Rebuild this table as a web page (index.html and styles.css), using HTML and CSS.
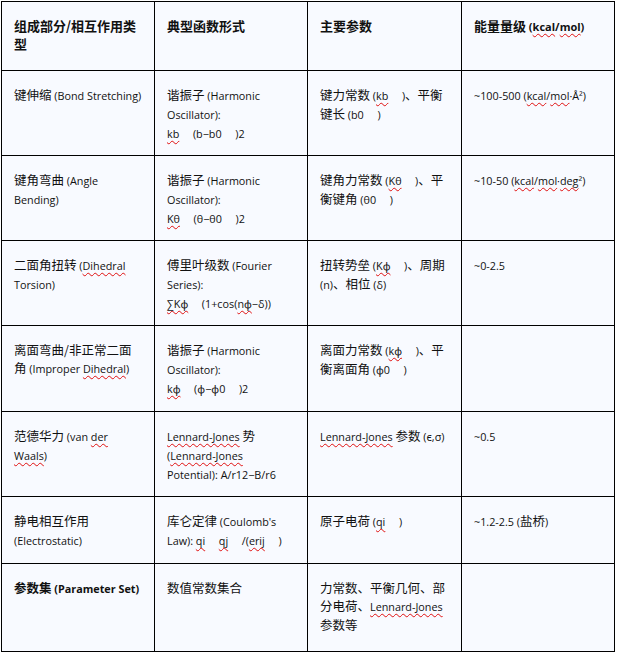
FILE: index.html
```html
<!DOCTYPE html>
<html lang="zh">
<head>
<meta charset="utf-8">
<title>力场组成</title>
<link rel="stylesheet" href="styles.css">
</head>
<body>
<div class="sheet">
  <div class="cell head">组成部分/相互作用类型</div>
  <div class="cell head">典型函数形式</div>
  <div class="cell head">主要参数</div>
  <div class="cell head">能量量级<span class="en"> (<span class="sp">kcal</span>/<span class="sp">mol</span>)</span></div>

  <div class="cell">键伸缩<span class="en"> (Bond Stretching)</span></div>
  <div class="cell">谐振子<span class="en"> (Harmonic Oscillator):<br><span class="sp">kb</span>&nbsp;&emsp;(b−b0&nbsp;&emsp;)2</span></div>
  <div class="cell">键力常数<span class="en"> (<span class="sp">kb</span>&nbsp;&emsp;)</span>、平衡键长<span class="en"> (b0&nbsp;&emsp;)</span></div>
  <div class="cell"><span class="en">~100-500 (<span class="sp">kcal</span>/<span class="sp">mol</span>·Å²)</span></div>

  <div class="cell">键角弯曲<span class="en"> (Angle Bending)</span></div>
  <div class="cell">谐振子<span class="en"> (Harmonic Oscillator):<br><span class="sp">Kθ</span>&nbsp;&emsp;(θ−θ0&nbsp;&emsp;)2</span></div>
  <div class="cell">键角力常数<span class="en"> (<span class="sp">Kθ</span>&nbsp;&emsp;)</span>、平衡键角<span class="en"> (θ0&nbsp;&emsp;)</span></div>
  <div class="cell"><span class="en">~10-50 (<span class="sp">kcal</span>/<span class="sp">mol</span>·<span class="sp">deg</span>²)</span></div>

  <div class="cell">二面角扭转<span class="en"> (<span class="sp">Dihedral</span> Torsion)</span></div>
  <div class="cell">傅里叶级数<span class="en"> (Fourier Series):<br><span class="sp">∑Kϕ</span>&nbsp;&emsp;(1+cos(<span class="sp">nϕ</span>−δ))</span></div>
  <div class="cell">扭转势垒<span class="en"> (<span class="sp">Kϕ</span>&nbsp;&emsp;)</span>、周期<span class="en"> (n)</span>、相位<span class="en"> (δ)</span></div>
  <div class="cell"><span class="en">~0-2.5</span></div>

  <div class="cell">离面弯曲/非正常二面角<span class="en"> (Improper <span class="sp">Dihedral</span>)</span></div>
  <div class="cell">谐振子<span class="en"> (Harmonic Oscillator):<br><span class="sp">kϕ</span>&nbsp;&emsp;(ϕ−ϕ0&nbsp;&emsp;)2</span></div>
  <div class="cell">离面力常数<span class="en"> (<span class="sp">kϕ</span>&nbsp;&emsp;)</span>、平衡离面角<span class="en"> (ϕ0&nbsp;&emsp;)</span></div>
  <div class="cell"></div>

  <div class="cell">范德华力<span class="en"> (van <span class="sp">der</span> <span class="sp">Waals</span>)</span></div>
  <div class="cell"><span class="en"><span class="sp">Lennard-Jones</span> </span>势<span class="en"> (<span class="sp">Lennard-Jones</span> Potential): A/r12−B/r6</span></div>
  <div class="cell"><span class="en"><span class="sp">Lennard-Jones</span> </span>参数<span class="en"> (ϵ,σ)</span></div>
  <div class="cell"><span class="en">~0.5</span></div>

  <div class="cell">静电相互作用<span class="en"> (Electrostatic)</span></div>
  <div class="cell">库仑定律<span class="en"> (Coulomb's Law): <span class="sp">qi</span>&nbsp;&emsp;<span class="sp">qj</span>&nbsp;&emsp;/(<span class="sp">erij</span>&nbsp;&emsp;)</span></div>
  <div class="cell">原子电荷<span class="en"> (<span class="sp">qi</span>&nbsp;&emsp;)</span></div>
  <div class="cell"><span class="en">~1.2-2.5 (</span>盐桥<span class="en">)</span></div>

  <div class="cell bold">参数集<span class="en"> (Parameter Set)</span></div>
  <div class="cell">数值常数集合</div>
  <div class="cell">力常数、平衡几何、部分电荷、<span class="en"><span class="sp">Lennard-Jones</span> </span>参数等</div>
  <div class="cell"></div>
</div>
</body>
</html>
```

FILE: styles.css
```css
html, body {
  margin: 0;
  padding: 0;
  background: #ffffff;
}

body {
  padding: 1px 0 0 1px;
  font-family: "Noto Sans CJK SC", sans-serif;
  font-size: 12.5px;
  line-height: 18px;
  color: #111111;
}

.sheet {
  display: grid;
  grid-template-columns: 152px 152px 153px 152px;
  grid-template-rows: 68px 84px 84px 84px 85px 84px 66px 87px;
  gap: 1px;
  padding: 1px;
  background: #000000;
  width: max-content;
}

.cell {
  background: #f8faff;
  padding: 15px 11.7px 0 12px;
}

.en {
  font-family: "Open Sans", "Noto Sans", "Noto Sans CJK SC", sans-serif;
  font-size: 10.8px;
}

.head {
  font-size: 13px;
  font-weight: 700;
}

.head .en {
  font-size: 11px;
}

.bold {
  font-weight: 700;
}

.sp {
  text-decoration: underline wavy #e01010;
  text-decoration-thickness: 1px;
  text-underline-offset: 2px;
  text-decoration-skip-ink: none;
}
```
